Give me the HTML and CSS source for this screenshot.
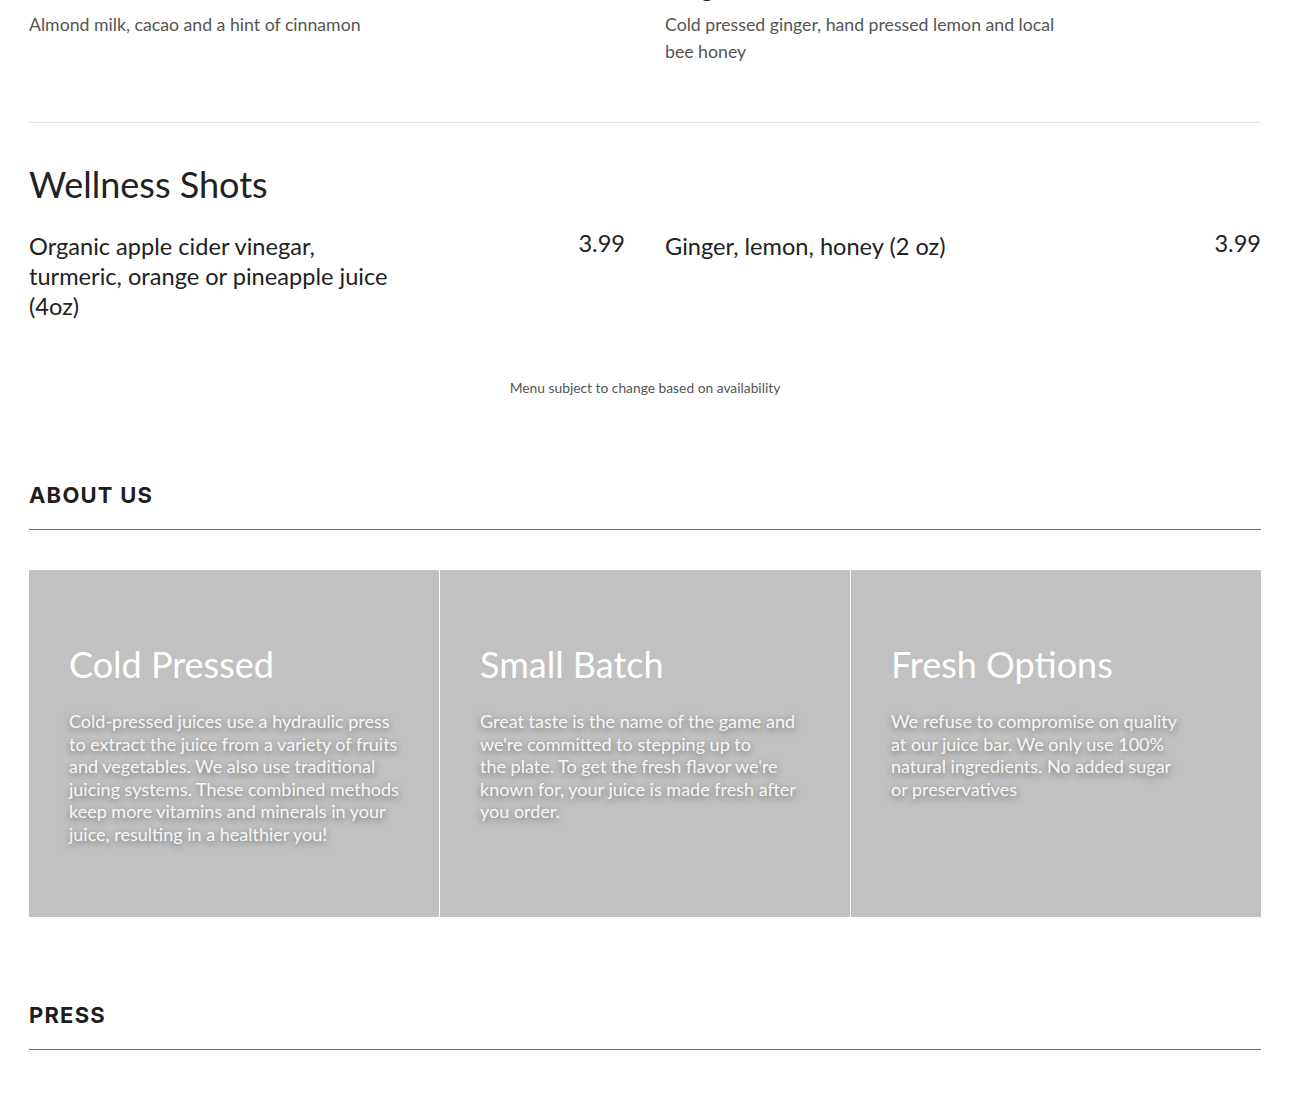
FILE: index.html
```html
<!DOCTYPE html>
<html lang="en">
<head>
<meta charset="utf-8">
<title>Menu</title>
<link rel="stylesheet" href="styles.css">
</head>
<body>
<main class="page">
  <section class="menu-cat menu-cat--first">
    <div class="menu-grid">
      <div class="item">
        <div class="item-body">
          <h3 class="item-title">Chocolate Almond Milk</h3>
          <p class="item-desc">Almond milk, cacao and a hint of cinnamon</p>
        </div>
        <span class="item-price">8.99</span>
      </div>
      <div class="item">
        <div class="item-body">
          <h3 class="item-title">Ginger Shot</h3>
          <p class="item-desc">Cold pressed ginger, hand pressed lemon and local bee honey</p>
        </div>
        <span class="item-price">3.99</span>
      </div>
    </div>
  </section>

  <section class="menu-cat menu-cat--last">
    <h2 class="cat-title">Wellness Shots</h2>
    <div class="menu-grid">
      <div class="item">
        <div class="item-body">
          <h3 class="item-title">Organic apple cider vinegar, turmeric, orange or pineapple juice (4oz)</h3>
        </div>
        <span class="item-price">3.99</span>
      </div>
      <div class="item">
        <div class="item-body">
          <h3 class="item-title">Ginger, lemon, honey (2 oz)</h3>
        </div>
        <span class="item-price">3.99</span>
      </div>
    </div>
    <p class="menu-note">Menu subject to change based on availability</p>
  </section>

  <section class="about">
    <h2 class="section-title">ABOUT US</h2>
    <div class="cards">
      <div class="card">
        <h3 class="card-title">Cold Pressed</h3>
        <p class="card-text">Cold-pressed juices use a hydraulic press<br>to extract the juice from a variety of fruits<br>and vegetables. We also use traditional<br>juicing systems. These combined methods<br>keep more vitamins and minerals in your<br>juice, resulting in a healthier you!</p>
      </div>
      <div class="card">
        <h3 class="card-title">Small Batch</h3>
        <p class="card-text">Great taste is the name of the game and<br>we're committed to stepping up to<br>the plate. To get the fresh flavor we're<br>known for, your juice is made fresh after<br>you order.</p>
      </div>
      <div class="card">
        <h3 class="card-title">Fresh Options</h3>
        <p class="card-text">We refuse to compromise on quality<br>at our juice bar. We only use 100%<br>natural ingredients. No added sugar<br>or preservatives</p>
      </div>
    </div>
  </section>

  <section class="press">
    <h2 class="section-title">PRESS</h2>
  </section>
</main>
</body>
</html>
```

FILE: styles.css
```css
* { box-sizing: border-box; }

html, body {
  margin: 0;
  padding: 0;
  background: #ffffff;
  overflow: hidden;
}

body {
  font-family: Lato, "Open Sans", "Liberation Sans", sans-serif;
  color: #222222;
}

.page {
  padding: 0 29px;
}

h1, h2, h3, p { margin: 0; font-weight: 400; }

.menu-cat--first {
  margin-top: -27px;
  padding-bottom: 57px;
  border-bottom: 1px solid #e3e3e3;
}

.menu-cat--last {
  padding-top: 39px;
}

.cat-title {
  font-size: 36px;
  line-height: 44px;
  color: #222222;
  margin-bottom: 25px;
}

.menu-grid {
  display: grid;
  grid-template-columns: 1fr 1fr;
  column-gap: 40px;
}

.item {
  display: flex;
  align-items: flex-start;
}

.item-body {
  width: 410px;
}

.item-title {
  max-width: 375px;
  font-size: 23.6px;
  line-height: 30px;
  color: #222222;
}

.item-desc {
  margin-top: 8px;
  font-size: 17.7px;
  line-height: 27px;
  color: #555555;
}

.item-price {
  margin-left: auto;
  margin-top: -3px;
  font-size: 23.6px;
  line-height: 30px;
  color: #222222;
}

.menu-note {
  margin-top: 57px;
  text-align: center;
  font-size: 13.8px;
  line-height: 20px;
  color: #555555;
}

.about {
  margin-top: 84px;
}

.section-title {
  font-family: Inter, "DejaVu Sans", sans-serif;
  font-weight: 700;
  font-size: 22px;
  line-height: 26px;
  letter-spacing: 1.2px;
  color: #1e1e1e;
  padding-bottom: 21px;
  border-bottom: 1px solid #6e6e6e;
}

.cards {
  margin-top: 40px;
  display: grid;
  grid-template-columns: repeat(3, 1fr);
  column-gap: 1px;
  background: #ffffff;
}

.card {
  background: #c1c1c1;
  height: 347px;
  padding: 73px 40px 0;
  color: #ffffff;
}

.card-title {
  font-size: 36px;
  line-height: 1.2;
  color: #ffffff;
}

.card-text {
  margin-top: 24px;
  font-size: 18px;
  line-height: 22.5px;
  white-space: nowrap;
  color: #f7f7f7;
  text-shadow: 0 2px 7px rgba(0, 0, 0, 0.45);
}

.press {
  margin-top: 85px;
}
```
